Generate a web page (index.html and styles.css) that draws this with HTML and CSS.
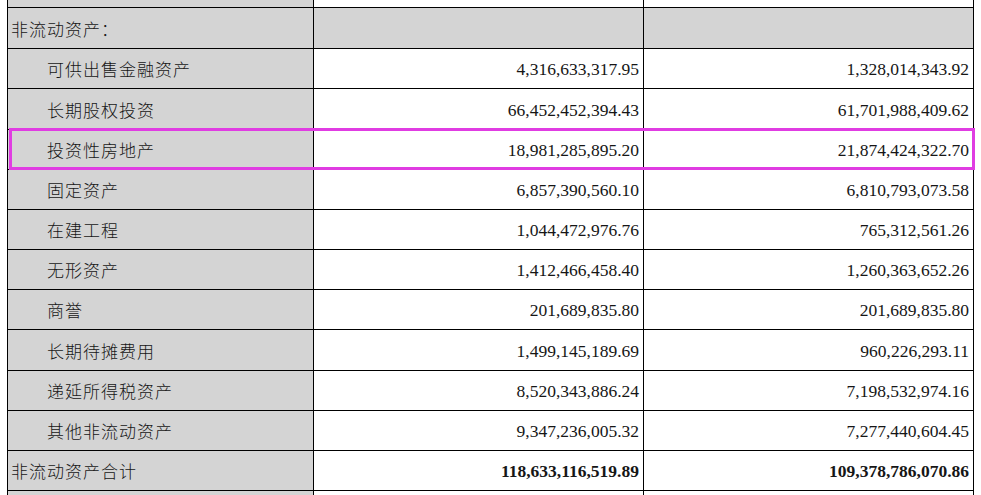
FILE: index.html
```html
<!DOCTYPE html>
<html lang="zh-CN">
<head>
<meta charset="utf-8">
<title>非流动资产</title>
<link rel="stylesheet" href="styles.css">
</head>
<body>
<div class="sheet">
  <div class="grid">
    <div class="c lbl strip-top"></div><div class="c num strip-top"></div><div class="c num strip-top"></div>

    <div class="c lbl sect">非流动资产：</div><div class="c num sect"></div><div class="c num sect"></div>

    <div class="c lbl ind">可供出售金融资产</div><div class="c num">4,316,633,317.95</div><div class="c num">1,328,014,343.92</div>
    <div class="c lbl ind">长期股权投资</div><div class="c num">66,452,452,394.43</div><div class="c num">61,701,988,409.62</div>
    <div class="c lbl ind">投资性房地产</div><div class="c num">18,981,285,895.20</div><div class="c num">21,874,424,322.70</div>
    <div class="c lbl ind">固定资产</div><div class="c num">6,857,390,560.10</div><div class="c num">6,810,793,073.58</div>
    <div class="c lbl ind">在建工程</div><div class="c num">1,044,472,976.76</div><div class="c num">765,312,561.26</div>
    <div class="c lbl ind">无形资产</div><div class="c num">1,412,466,458.40</div><div class="c num">1,260,363,652.26</div>
    <div class="c lbl ind">商誉</div><div class="c num">201,689,835.80</div><div class="c num">201,689,835.80</div>
    <div class="c lbl ind">长期待摊费用</div><div class="c num">1,499,145,189.69</div><div class="c num">960,226,293.11</div>
    <div class="c lbl ind">递延所得税资产</div><div class="c num">8,520,343,886.24</div><div class="c num">7,198,532,974.16</div>
    <div class="c lbl ind">其他非流动资产</div><div class="c num">9,347,236,005.32</div><div class="c num">7,277,440,604.45</div>
    <div class="c lbl">非流动资产合计</div><div class="c num total">118,633,116,519.89</div><div class="c num total">109,378,786,070.86</div>

    <div class="c lbl strip-bot"></div><div class="c num strip-bot"></div><div class="c num strip-bot"></div>
  </div>
  <div class="highlight"></div>
</div>
</body>
</html>
```

FILE: styles.css
```css
html, body {
  margin: 0;
  padding: 0;
  background: #ffffff;
}

body {
  width: 981px;
  height: 495px;
  overflow: hidden;
}

.sheet {
  position: relative;
  padding-left: 7px;
}

.grid {
  display: grid;
  width: 965px;
  grid-template-columns: 305px 329px 329px;
  grid-template-rows: 7px 40px 39px 40px 39px 39px 39px 39px 39px 40px 39px 39px 39px 10px;
  column-gap: 1px;
  row-gap: 1px;
  padding: 0 1px;
  background: #000000;
}

.c {
  display: flex;
  align-items: center;
  background: #ffffff;
  color: #161616;
  overflow: hidden;
}

.lbl {
  background: #d4d4d4;
  font-family: "Noto Sans CJK SC", "Noto Sans", sans-serif;
  font-size: 17px;
  font-weight: 300;
  letter-spacing: 1px;
  padding-left: 3px;
  white-space: nowrap;
}

.ind {
  padding-left: 39px;
}

.sect {
  background: #d4d4d4;
}

.num {
  justify-content: flex-end;
  padding-right: 4px;
  font-family: "Liberation Serif", "Times New Roman", serif;
  font-size: 17.5px;
  padding-top: 2px;
}

.total {
  font-weight: bold;
}

.strip-top, .strip-bot {
  padding: 0;
}

.highlight {
  position: absolute;
  left: 9px;
  top: 128px;
  width: 960px;
  height: 36px;
  border: 3px solid #e03ce2;
  pointer-events: none;
}
```
